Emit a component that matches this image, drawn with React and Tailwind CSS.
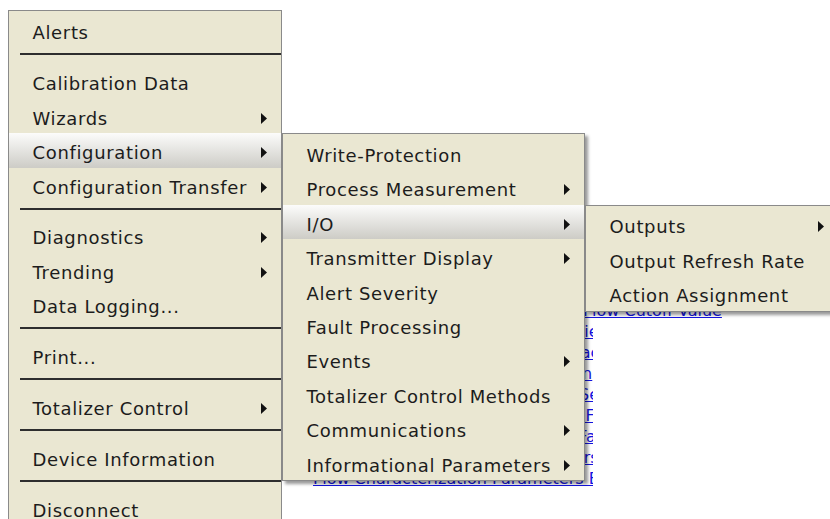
import React from "react";

const mainItems = [
  { label: "Alerts" },
  { sep: true },
  { label: "Calibration Data" },
  { label: "Wizards", arrow: true },
  { label: "Configuration", arrow: true, active: true },
  { label: "Configuration Transfer", arrow: true },
  { sep: true },
  { label: "Diagnostics", arrow: true },
  { label: "Trending", arrow: true },
  { label: "Data Logging..." },
  { sep: true },
  { label: "Print..." },
  { sep: true },
  { label: "Totalizer Control", arrow: true },
  { sep: true },
  { label: "Device Information" },
  { sep: true },
  { label: "Disconnect" },
];

const configItems = [
  { label: "Write-Protection" },
  { label: "Process Measurement", arrow: true },
  { label: "I/O", arrow: true, active: true },
  { label: "Transmitter Display", arrow: true },
  { label: "Alert Severity" },
  { label: "Fault Processing" },
  { label: "Events", arrow: true },
  { label: "Totalizer Control Methods" },
  { label: "Communications", arrow: true },
  { label: "Informational Parameters", arrow: true },
];

const ioItems = [
  { label: "Outputs", arrow: true },
  { label: "Output Refresh Rate" },
  { label: "Action Assignment" },
];

const bgLines = [
  "Low Flow Cutoff Description: Low Flow Cutoff Value",
  "Flow Direction Parameters Entry Field",
  "Flow Damping Factor and Meter Factor Entry",
  "Mass Flow Units [kg/min] Selection",
  "Volume Flow Type Liquid Volume Selection",
  "Density Units and Damping Entry Field X",
  "Temperature Units and Damping Factor",
  "Pressure Compensation Parameters Entry",
  "Flow Characterization Parameters Entry Fields",
];

function Arrow() {
  return (
    <svg width="6" height="11" viewBox="0 0 6 11" className="ml-auto shrink-0">
      <path d="M0 0L6 5.5L0 11Z" fill="#111111" />
    </svg>
  );
}

function MenuRows({ items }) {
  return items.map((it, i) =>
    it.sep ? (
      <div key={i} className="pt-[5.5px] pb-[8.9px] pl-[11px]">
        <div className="h-[2px] bg-[#2e2e2e]" />
      </div>
    ) : (
      <div
        key={i}
        className={
          it.active
            ? "flex h-[34.44px] items-center pt-[4.3px] pl-[23.5px] pr-[14.5px] bg-linear-to-b from-[#fcfcfb] to-[#cdccc6]"
            : "flex h-[34.44px] items-center pt-[4.3px] pl-[23.5px] pr-[14.5px]"
        }
      >
        <span className="whitespace-nowrap leading-[21px]">{it.label}</span>
        {it.arrow ? <Arrow /> : null}
      </div>
    )
  );
}

export default function App() {
  return (
    <div className="relative w-[830px] h-[519px] overflow-hidden bg-white font-['DejaVu_Sans',sans-serif]">
      {/* underlying page content */}
      <div className="pt-[300px] pl-[313px] text-[16px] leading-[21px] text-[#1414e0] underline">
        <div className="w-[434px] overflow-hidden whitespace-nowrap">{bgLines[0]}</div>
        {bgLines.slice(1).map((t, i) => (
          <div key={i} className="w-[280px] overflow-hidden whitespace-nowrap">
            {t}
          </div>
        ))}
      </div>

      {/* main context menu */}
      <div className="absolute left-[8px] top-[10px] w-[274px] h-[540px] border border-[#8a8a8a] bg-[#eae7d2] pt-[2.5px] text-[18px] tracking-[0.65px] text-[#1c1c1c]">
        <MenuRows items={mainItems} />
      </div>

      {/* Configuration submenu */}
      <div className="absolute left-[282px] top-[133px] w-[303px] border border-[#8a8a8a] bg-[#eae7d2] pt-[2px] text-[18px] tracking-[0.65px] text-[#1c1c1c] shadow-[3px_3px_3px_rgba(0,0,0,0.4)]">
        <MenuRows items={configItems} />
      </div>

      {/* I/O submenu */}
      <div className="absolute left-[585px] top-[205px] w-[254px] border border-[#8a8a8a] bg-[#eae7d2] pt-[1.5px] text-[18px] tracking-[0.65px] text-[#1c1c1c] shadow-[3px_3px_3px_rgba(0,0,0,0.4)]">
        <MenuRows items={ioItems} />
      </div>
    </div>
  );
}
